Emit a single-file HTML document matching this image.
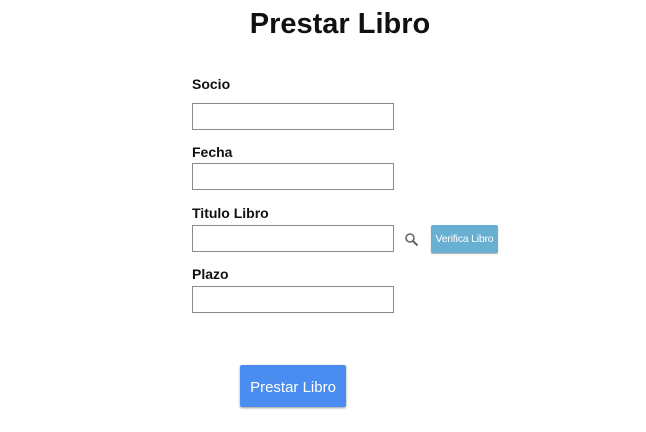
<!DOCTYPE html>
<html><head><style>
body{margin:0;width:646px;height:432px;background:#fff;font-family:"Liberation Sans",sans-serif;position:relative;overflow:hidden}
.a{position:absolute}
h1{position:absolute;left:0;width:680px;text-align:center;top:8px;margin:0;font-size:29px;font-weight:bold;color:#111}
.l{position:absolute;left:192px;font-size:14px;font-weight:bold;color:#111}
.i{position:absolute;left:192px;border:1px solid #8a8a8a;box-sizing:border-box;width:202px;height:27px}
</style></head><body>
<h1>Prestar Libro</h1>
<div class="l" style="top:76px">Socio</div>
<div class="i" style="top:103px"></div>
<div class="l" style="top:144px">Fecha</div>
<div class="i" style="top:163px"></div>
<div class="l" style="top:205px">Titulo Libro</div>
<div class="i" style="top:225px"></div>
<svg class="a" style="left:404px;top:232px" width="16" height="16" viewBox="0 0 16 16"><circle cx="6" cy="6" r="4" fill="none" stroke="#666" stroke-width="1.6"/><line x1="9" y1="9" x2="13.5" y2="13.5" stroke="#666" stroke-width="2"/></svg>
<div class="a" style="left:431px;top:225px;width:67px;height:28px;background:#68b0d2;border-radius:2px;box-shadow:0 1px 1px #aaa;color:#fff;font-size:10.5px;line-height:29px;text-align:center;letter-spacing:-0.2px">Verifica Libro</div>
<div class="l" style="top:266px">Plazo</div>
<div class="i" style="top:286px"></div>
<div class="a" style="left:240px;top:365px;width:106px;height:42px;background:#4a8cf0;border-radius:2px;box-shadow:0 1px 2px #999;color:#fff;font-size:15px;line-height:45px;text-align:center">Prestar Libro</div>
</body></html>
